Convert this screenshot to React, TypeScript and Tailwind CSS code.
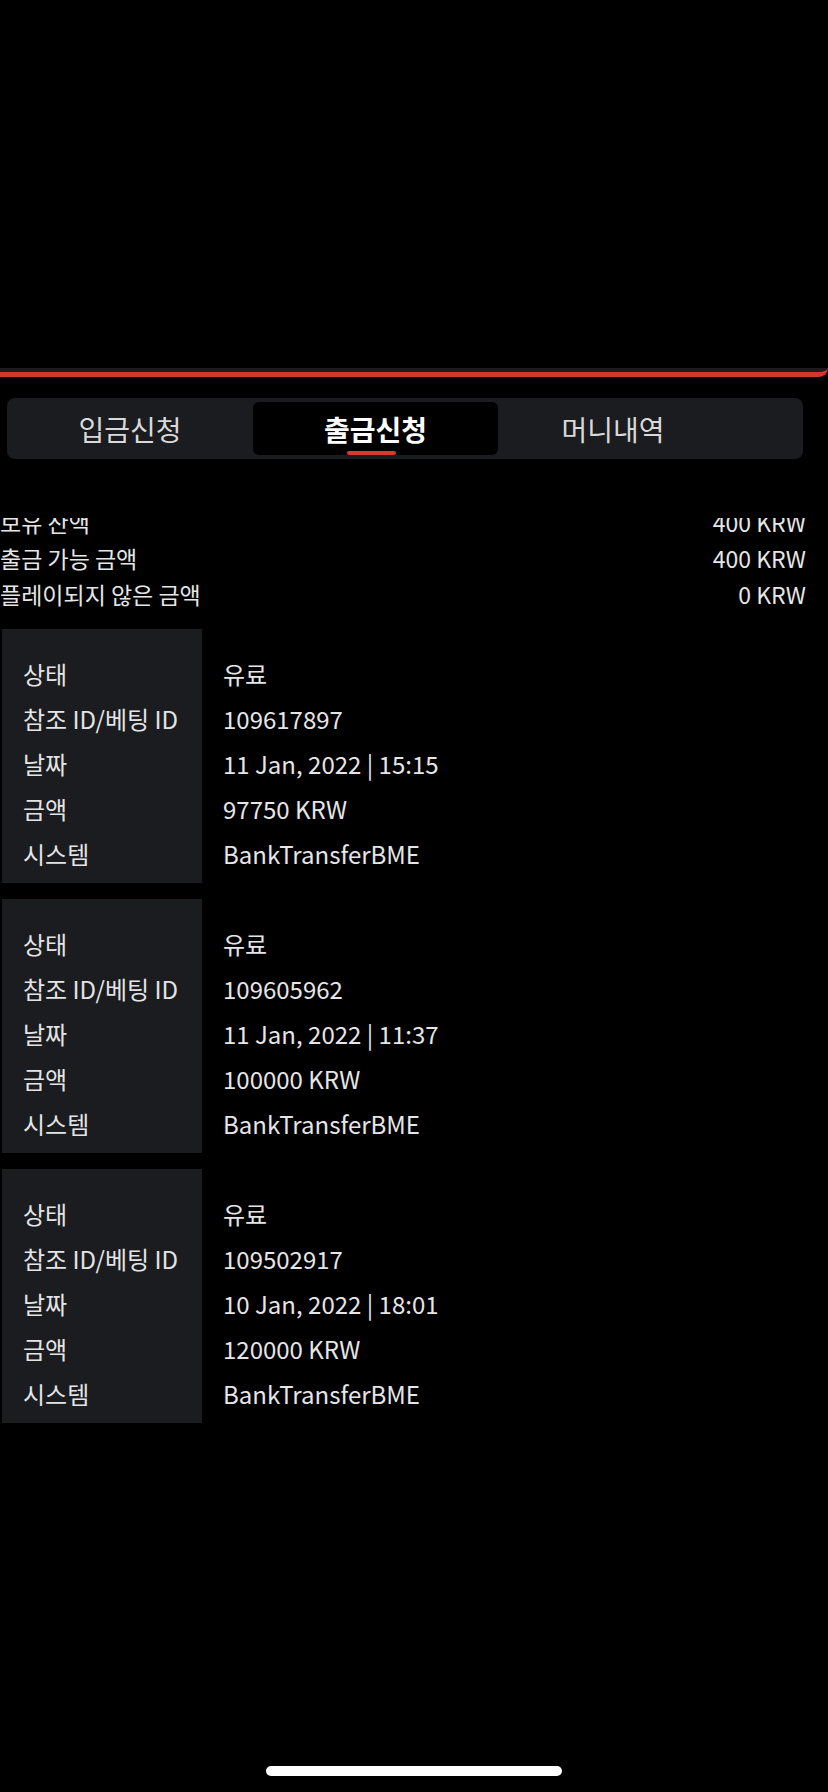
import * as React from "react";

const FONT = { fontFamily: '"Noto Sans CJK KR", "Noto Sans", sans-serif' };

type Tx = { status: string; ref: string; date: string; amount: string; system: string };

const TXS: Tx[] = [
  { status: "유료", ref: "109617897", date: "11 Jan, 2022 | 15:15", amount: "97750 KRW", system: "BankTransferBME" },
  { status: "유료", ref: "109605962", date: "11 Jan, 2022 | 11:37", amount: "100000 KRW", system: "BankTransferBME" },
  { status: "유료", ref: "109502917", date: "10 Jan, 2022 | 18:01", amount: "120000 KRW", system: "BankTransferBME" },
];

const LABELS = ["상태", "참조 ID/베팅 ID", "날짜", "금액", "시스템"];

const SUMMARY = [
  { label: "보유 잔액", value: "400 KRW" },
  { label: "출금 가능 금액", value: "400 KRW" },
  { label: "플레이되지 않은 금액", value: "0 KRW" },
];

function Tabs() {
  return (
    <div className="ml-[7px] mr-[25px] flex h-[61px] items-center rounded-[8px] bg-[#1b1c20]">
      <div className="flex h-full w-[246px] items-center justify-center text-[28px] text-[#d9d9d9]">입금신청</div>
      <div className="relative flex h-[53px] w-[245px] items-center justify-center rounded-[6px] bg-black text-[28px] font-bold text-white">
        출금신청
        <span className="absolute bottom-0 left-[94px] h-[4px] w-[49px] rounded-full bg-[#d63a32]" />
      </div>
      <div className="flex h-full w-[230px] items-center justify-center text-[28px] text-[#d9d9d9]">머니내역</div>
    </div>
  );
}

function TxCard({ tx }: { tx: Tx }) {
  const values = [tx.status, tx.ref, tx.date, tx.amount, tx.system];
  return (
    <div className="flex h-[254px]">
      <div className="ml-[2px] w-[200px] bg-[#1b1c20] pl-[21px] pt-[22px]">
        {LABELS.map((l) => (
          <div key={l} className="h-[45px] whitespace-nowrap text-[24px] leading-[45px] text-[#e4e4e4]">{l}</div>
        ))}
      </div>
      <div className="pl-[21px] pt-[22px]">
        {values.map((v, i) => (
          <div key={i} className="h-[45px] whitespace-nowrap text-[24px] leading-[45px] text-[#e6e6e6]">{v}</div>
        ))}
      </div>
    </div>
  );
}

export default function App() {
  return (
    <div className="relative min-h-[1792px] w-[828px] overflow-hidden bg-black" style={FONT}>
      <div className="h-[368px] bg-black" />
      <div className="h-[9px] rounded-br-[10px] border-b-[5px] border-[#cc3a30] bg-[#1c1c1f]" />

      <div className="pt-[21px]">
        <Tabs />
      </div>

      <div className="mt-[59px] overflow-hidden">
        <div className="-mt-[14px] pr-[22px]">
          {SUMMARY.map((s) => (
            <div key={s.label} className="flex h-[36px] items-center justify-between text-[23px] leading-[36px] text-[#e6e6e6]">
              <span>{s.label}</span>
              <span>{s.value}</span>
            </div>
          ))}
        </div>

        <div className="mt-[17px] flex flex-col gap-[16px]">
          {TXS.map((tx) => (
            <TxCard key={tx.ref} tx={tx} />
          ))}
        </div>
      </div>

      <div className="absolute bottom-[16px] left-[266px] h-[10px] w-[296px] rounded-full bg-white" />
    </div>
  );
}
